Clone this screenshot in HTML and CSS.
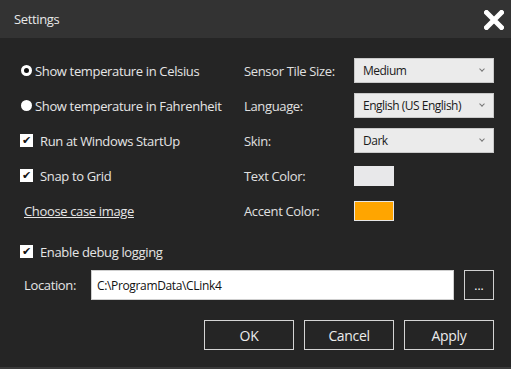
FILE: index.html
```html
<!DOCTYPE html>
<html lang="en">
<head>
    <meta charset="UTF-8">
    <meta name="viewport" content="width=device-width, initial-scale=1.0">
    <title>Settings</title>
    <link rel="stylesheet" href="styles.css">
</head>
<body>
    <div class="window">
        <!-- Title bar -->
        <div class="titlebar">
            <span class="title">Settings</span>
            <svg class="close" width="20" height="20" viewBox="0 0 20 20">
                <path d="M2.5 2.5 L17.5 17.5 M17.5 2.5 L2.5 17.5" stroke="#fff" stroke-width="5" stroke-linecap="square"/>
            </svg>
        </div>

        <div class="content">
            <div class="columns">
                <!-- Left options -->
                <div class="left">
                    <div class="row radio-row">
                        <span class="radio checked"></span>
                        <span>Show temperature in Celsius</span>
                    </div>
                    <div class="row radio-row">
                        <span class="radio"></span>
                        <span>Show temperature in Fahrenheit</span>
                    </div>
                    <div class="row check-row">
                        <span class="check">&#10004;</span>
                        <span>Run at Windows StartUp</span>
                    </div>
                    <div class="row check-row">
                        <span class="check">&#10004;</span>
                        <span>Snap to Grid</span>
                    </div>
                    <div class="row link-row">
                        <a class="link">Choose case image</a>
                    </div>
                </div>

                <!-- Right options -->
                <div class="right">
                    <div class="row">
                        <span class="label">Sensor Tile Size:</span>
                        <div class="dropdown">Medium<span class="chevron"></span></div>
                    </div>
                    <div class="row">
                        <span class="label">Language:</span>
                        <div class="dropdown">English (US English)<span class="chevron"></span></div>
                    </div>
                    <div class="row">
                        <span class="label">Skin:</span>
                        <div class="dropdown">Dark<span class="chevron"></span></div>
                    </div>
                    <div class="row">
                        <span class="label">Text Color:</span>
                        <div class="swatch text-swatch"></div>
                    </div>
                    <div class="row">
                        <span class="label">Accent Color:</span>
                        <div class="swatch accent-swatch"></div>
                    </div>
                </div>
            </div>

            <div class="row check-row debug-row">
                <span class="check">&#10004;</span>
                <span>Enable debug logging</span>
            </div>

            <div class="location-row">
                <span class="location-label">Location:</span>
                <div class="textbox">C:\ProgramData\CLink4</div>
                <button class="browse">...</button>
            </div>

            <div class="buttons">
                <button class="btn">OK</button>
                <button class="btn">Cancel</button>
                <button class="btn">Apply</button>
            </div>
        </div>
    </div>
</body>
</html>
```

FILE: styles.css
```css
/* General reset */
body {
    margin: 0;
    padding: 0;
    font-family: 'Open Sans', 'Noto Sans', sans-serif;
    font-size: 13px;
    letter-spacing: -0.35px;
    color: #e6e6e6;
    background-color: #252525;
}

.window {
    width: 511px;
    height: 369px;
    box-sizing: border-box;
    background-color: #252525;
    border-bottom: 2px solid #3a3a3a;
    overflow: hidden;
}

/* Title bar */
.titlebar {
    height: 38px;
    background-color: #333333;
    display: flex;
    align-items: center;
    justify-content: space-between;
    padding: 0 7px 0 14px;
}

.title {
    font-size: 13px;
    color: #e8e8e8;
}

.close {
    margin-top: 1px;
}

/* Main content */
.content {
    padding: 15px 17px 0 20px;
}

.columns {
    display: flex;
}

.left {
    width: 224px;
}

.right {
    flex: 1;
}

.row {
    height: 35px;
    display: flex;
    align-items: center;
}

/* Radio buttons */
.radio {
    width: 11px;
    height: 11px;
    border-radius: 50%;
    background-color: #fff;
    margin: 0 3px 0 1px;
    box-sizing: border-box;
}

.radio.checked {
    border: 3px solid #fff;
    background-color: #111;
    box-shadow: inset 0 0 0 1px #111;
}

/* Checkboxes */
.check {
    width: 13px;
    height: 13px;
    background-color: #fff;
    color: #111;
    font-size: 11px;
    font-weight: bold;
    line-height: 13px;
    text-align: center;
    margin-right: 7px;
    letter-spacing: 0;
    font-family: 'DejaVu Sans', sans-serif;
}

.link-row {
    padding-left: 4px;
}

.link {
    text-decoration: underline;
    color: #e6e6e6;
}

/* Right column */
.label {
    width: 110px;
    color: #e0e0e0;
}

.dropdown {
    width: 140px;
    height: 25px;
    box-sizing: border-box;
    background-color: #ebebeb;
    border: 1px solid #c9c9c9;
    color: #1a1a1a;
    font-size: 12px;
    letter-spacing: -0.5px;
    padding-left: 8px;
    display: flex;
    align-items: center;
    position: relative;
}

.chevron {
    position: absolute;
    right: 9px;
    top: 8px;
    width: 3px;
    height: 3px;
    border-right: 1px solid #777;
    border-bottom: 1px solid #777;
    transform: rotate(45deg);
}

.swatch {
    width: 40px;
    height: 20px;
    box-sizing: border-box;
}

.text-swatch {
    background-color: #e8e8ea;
}

.accent-swatch {
    background-color: #ffa500;
    border: 1px solid #e6e6e6;
}

.debug-row {
    margin-top: 6px;
}

/* Location */
.location-row {
    display: flex;
    align-items: center;
    height: 30px;
    margin-top: 1px;
}

.location-label {
    width: 67px;
    padding-left: 4px;
}

.textbox {
    width: 363px;
    height: 30px;
    box-sizing: border-box;
    background-color: #fff;
    border: 1px solid #cfcfcf;
    color: #111;
    font-size: 12px;
    padding-left: 5px;
    display: flex;
    align-items: center;
}

.browse {
    width: 30px;
    height: 30px;
    margin-left: 10px;
    background-color: transparent;
    border: 1px solid #d0d0d0;
    color: #fff;
    font-family: inherit;
    font-size: 12px;
    padding: 0;
    line-height: 30px;
}

/* Bottom buttons */
.buttons {
    display: flex;
    justify-content: flex-end;
    gap: 10px;
    margin-top: 20px;
}

.btn {
    width: 90px;
    height: 30px;
    background-color: transparent;
    border: 1px solid #d4d4d4;
    color: #ececec;
    font-family: inherit;
    font-size: 14px;
    letter-spacing: -0.35px;
    padding: 0;
}
```
